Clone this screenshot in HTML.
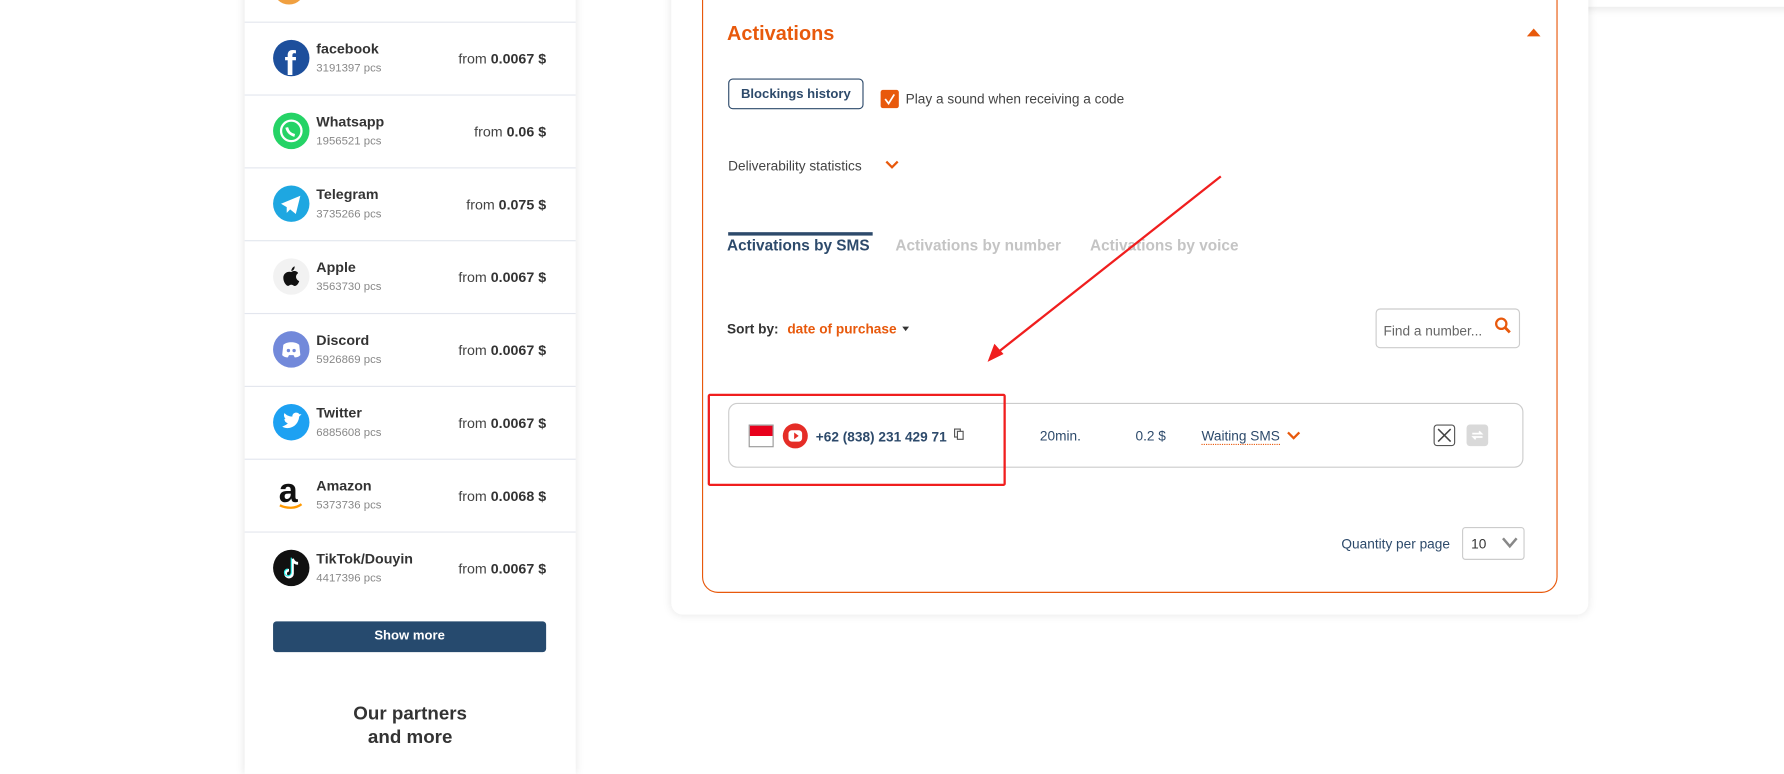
<!DOCTYPE html>
<html><head><meta charset="utf-8"><style>
html,body{margin:0;padding:0;background:#fff;overflow:hidden;width:1784px;height:758px}
#w{position:absolute;left:0;top:0;width:1568px;height:666px;transform:scale(1.13776,1.1381);transform-origin:0 0;font-family:"Liberation Sans",sans-serif}
.a{position:absolute}
.lp{left:215px;top:-10px;width:291px;height:690px;background:#fff;box-shadow:0 0 8px rgba(0,0,0,.12)}
.row{position:absolute;left:215px;width:291px;height:64px;border-top:1px solid #e3e6ee}
.ic{position:absolute;left:25px;top:15px;width:32px;height:32px;border-radius:50%;overflow:hidden}
.nm{position:absolute;left:63px;top:16px;font-size:12.5px;font-weight:bold;color:#333}
.pc{position:absolute;left:63px;top:35px;font-size:10px;color:#888}
.pr{position:absolute;right:26px;top:25px;font-size:12.5px;color:#444}
.pr b{color:#333}
.t{color:#2d4a6b}
</style></head><body><div id="w">
<div class="a" style="left:1390px;top:-10px;width:200px;height:16px;box-shadow:0 2px 8px rgba(0,0,0,.1);background:#fff"></div>
<div class="a lp"></div>
<div class="a" style="left:240px;top:-24px;width:28px;height:28px;border-radius:50%;background:#f0a040"></div>
<div class="row" style="top:19px"><div class="ic" style="background:#1d4f9c"><div class="a" style="left:10px;top:5px;color:#fff;font-size:30px;font-weight:bold">f</div></div><div class="nm">facebook</div><div class="pc">3191397 pcs</div><div class="pr">from <b>0.0067 $</b></div></div>
<div class="row" style="top:83px"><div class="ic" style="background:#25d366"><svg width="32" height="32"><circle cx="16" cy="16" r="9" fill="none" stroke="#fff" stroke-width="2"/><path d="M12 13c1 4 3 6 7 7" stroke="#fff" stroke-width="2.5" fill="none"/></svg></div><div class="nm">Whatsapp</div><div class="pc">1956521 pcs</div><div class="pr">from <b>0.06 $</b></div></div>
<div class="row" style="top:147px"><div class="ic" style="background:#1ea7e1"><svg width="32" height="32"><path d="M7 16l17-7-4 16-5-4-3 3v-5z" fill="#fff"/></svg></div><div class="nm">Telegram</div><div class="pc">3735266 pcs</div><div class="pr">from <b>0.075 $</b></div></div>
<div class="row" style="top:211px"><div class="ic" style="background:#f2f2f2"><svg width="32" height="32"><path d="M16 12c3-2 6 0 6 1-3 2-2 6 1 7-1 3-3 5-5 4-1-1-3-1-4 0-2 1-5-3-5-7 0-4 4-6 7-5z" fill="#111"/><path d="M16 11c0-2 2-4 3-4 0 2-1 4-3 4z" fill="#111"/></svg></div><div class="nm">Apple</div><div class="pc">3563730 pcs</div><div class="pr">from <b>0.0067 $</b></div></div>
<div class="row" style="top:275px"><div class="ic" style="background:#7289da"><svg width="32" height="32"><path d="M9 12c3-3 11-3 14 0l1 9c-2 2-4 2-5 2l-1-2h-4l-1 2c-1 0-3 0-5-2z" fill="#fff"/><circle cx="13.5" cy="17" r="1.5" fill="#7289da"/><circle cx="18.5" cy="17" r="1.5" fill="#7289da"/></svg></div><div class="nm">Discord</div><div class="pc">5926869 pcs</div><div class="pr">from <b>0.0067 $</b></div></div>
<div class="row" style="top:339px"><div class="ic" style="background:#1da1f2"><svg width="32" height="32"><path d="M8 20c6 3 14 0 15-9l2-2-2 0c-1-2-5-2-6 1v1c-3 0-5-1-7-3-1 2 0 4 1 5h-1c0 2 1 3 3 4-1 1-3 2-5 3z" fill="#fff"/></svg></div><div class="nm">Twitter</div><div class="pc">6885608 pcs</div><div class="pr">from <b>0.0067 $</b></div></div>
<div class="row" style="top:403px"><div class="ic" style="background:#fff"><div class="a" style="left:5px;top:-4px;font-size:30px;font-weight:bold;color:#111">a</div><svg class="a" width="32" height="32"><path d="M6 25c6 3 14 3 19-1" stroke="#f90" stroke-width="2" fill="none"/></svg></div><div class="nm">Amazon</div><div class="pc">5373736 pcs</div><div class="pr">from <b>0.0068 $</b></div></div>
<div class="row" style="top:467px"><div class="ic" style="background:#111"><svg width="32" height="32"><path d="M17 8v13a3 3 0 1 1-3-3M17 8c1 3 3 4 5 4" stroke="#fff" stroke-width="2.5" fill="none"/><path d="M16 7v13a3 3 0 1 1-3-3" stroke="#25f4ee" stroke-width="1" fill="none"/></svg></div><div class="nm">TikTok/Douyin</div><div class="pc">4417396 pcs</div><div class="pr">from <b>0.0067 $</b></div></div>
<div class="a" style="left:240px;top:546px;width:240px;height:27px;background:#264a6e;border-radius:3px;color:#fff;font-size:11.5px;font-weight:bold;text-align:center;line-height:27px">Show more</div>
<div class="a" style="left:215px;top:617px;width:291px;text-align:center;font-size:16.5px;font-weight:bold;color:#333;line-height:21px">Our partners<br>and more</div>

<div class="a" style="left:590px;top:-20px;width:806px;height:560px;background:#fff;border-radius:10px;box-shadow:0 0 8px rgba(0,0,0,.1)"></div>
<div class="a" style="left:617px;top:-20px;width:750px;height:539px;border:1px solid #e8590c;border-radius:14px"></div>
<div class="a" style="left:639px;top:19px;font-size:17.5px;font-weight:bold;color:#e8590c">Activations</div>
<div class="a" style="left:1342px;top:25px;width:0;height:0;border-left:6px solid transparent;border-right:6px solid transparent;border-bottom:7px solid #e8590c"></div>
<div class="a t" style="left:640px;top:69px;width:119px;height:27px;border:1px solid #2d4a6b;border-radius:4px;box-sizing:border-box;font-size:11.5px;font-weight:bold;text-align:center;line-height:26px">Blockings history</div>
<div class="a" style="left:774px;top:79px;width:16px;height:16px;background:#e8590c;border-radius:2px"><svg width="16" height="16"><path d="M4 8l3 4 5-8" stroke="#fff" stroke-width="1.5" fill="none"/></svg></div>
<div class="a" style="left:796px;top:80px;font-size:12px;color:#444">Play a sound when receiving a code</div>
<div class="a" style="left:640px;top:139px;font-size:12px;color:#444">Deliverability statistics</div>
<svg class="a" style="left:778px;top:140px" width="12" height="10"><path d="M1 2l5 5 5-5" stroke="#e8590c" stroke-width="2" fill="none"/></svg>
<div class="a" style="left:640px;top:204px;width:127px;height:3px;background:#2d4a6b"></div>
<div class="a t" style="left:639px;top:208px;font-size:13.5px;font-weight:bold">Activations by SMS</div>
<div class="a" style="left:787px;top:208px;font-size:13.5px;font-weight:bold;color:#c4c4c4">Activations by number</div>
<div class="a" style="left:958px;top:208px;font-size:13.5px;font-weight:bold;color:#c4c4c4">Activations by voice</div>
<div class="a" style="left:639px;top:282px;font-size:12px;font-weight:bold;color:#333">Sort by:</div>
<div class="a" style="left:692px;top:282px;font-size:12px;font-weight:bold;color:#e8590c">date of purchase</div>
<div class="a" style="left:793px;top:287px;border-left:3.5px solid transparent;border-right:3.5px solid transparent;border-top:4px solid #333"></div>
<div class="a" style="left:1209px;top:271px;width:127px;height:35px;border:1px solid #ccc;border-radius:4px;box-sizing:border-box"></div>
<div class="a" style="left:1216px;top:284px;font-size:12px;color:#666">Find a number...</div>
<svg class="a" style="left:1313px;top:278px" width="16" height="16"><circle cx="6.5" cy="6.5" r="4.5" stroke="#e8590c" stroke-width="2" fill="none"/><path d="M10 10l4 4" stroke="#e8590c" stroke-width="2.5"/></svg>
<div class="a" style="left:640px;top:354px;width:699px;height:57px;border:1px solid #ccc;border-radius:8px;box-sizing:border-box"></div>
<div class="a" style="left:658px;top:373px;width:20px;height:18px;border:1px solid #999;background:linear-gradient(#e8001c 50%,#fff 50%)"></div>
<div class="a" style="left:688px;top:372px;width:22px;height:22px;border-radius:50%;background:#e52d27"><div class="a" style="left:5px;top:6px;width:12px;height:10px;background:#fff;border-radius:3px"></div><div class="a" style="left:10px;top:8px;border-top:3px solid transparent;border-bottom:3px solid transparent;border-left:4px solid #e52d27"></div></div>
<div class="a t" style="left:717px;top:377px;font-size:12px;font-weight:bold">+62 (838) 231 429 71</div>
<svg class="a" style="left:838px;top:376px" width="10" height="11"><rect x="1" y="1" width="5" height="7" fill="none" stroke="#555"/><rect x="3.5" y="3" width="5" height="7" fill="#fff" stroke="#555"/></svg>
<div class="a t" style="left:914px;top:376px;font-size:12px">20min.</div>
<div class="a t" style="left:998px;top:376px;font-size:12px">0.2 $</div>
<div class="a t" style="left:1056px;top:376px;font-size:12px;border-bottom:1px dotted #e8590c;line-height:14px">Waiting SMS</div>
<svg class="a" style="left:1131px;top:378px" width="12" height="10"><path d="M1 2l5 5 5-5" stroke="#e8590c" stroke-width="2" fill="none"/></svg>
<div class="a" style="left:1260px;top:373px;width:19px;height:19px;border:1px solid #555;border-radius:3px;box-sizing:border-box"><svg width="17" height="17"><path d="M3 3l11 11M14 3L3 14" stroke="#444" stroke-width="1.3"/></svg></div>
<div class="a" style="left:1289px;top:373px;width:19px;height:19px;background:#d9d9d9;border-radius:3px"><svg width="19" height="19"><path d="M5 8h8l-2-2M14 11H6l2 2" stroke="#fff" stroke-width="1.5" fill="none"/></svg></div>
<div class="a" style="left:622px;top:346px;width:262px;height:81px;border:2px solid #f01e1e;box-sizing:border-box;border-radius:2px"></div>
<svg class="a" style="left:860px;top:150px" width="220" height="175"><path d="M213 5L14 162" stroke="#f01e1e" stroke-width="2"/><path d="M8 168l6-16 8 9z" fill="#f01e1e"/></svg>
<div class="a t" style="left:1179px;top:471px;font-size:12px">Quantity per page</div>
<div class="a" style="left:1285px;top:463px;width:55px;height:29px;border:1px solid #ccc;border-radius:3px;box-sizing:border-box"></div>
<div class="a" style="left:1293px;top:471px;font-size:12px;color:#333">10</div>
<svg class="a" style="left:1320px;top:472px" width="14" height="10"><path d="M1 1l6 7 6-7" stroke="#888" stroke-width="2.2" fill="none"/></svg>
</div></body></html>
